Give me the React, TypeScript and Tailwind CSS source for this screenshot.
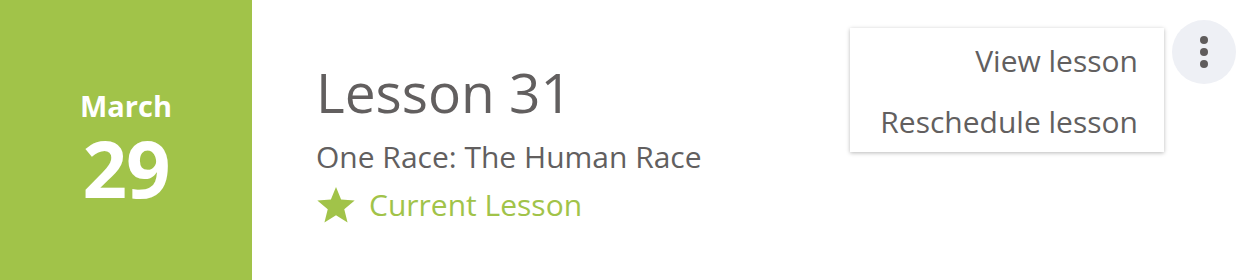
import { useState } from 'react'

// ------------------------------------------------------------
// Lesson card with open menu
// ------------------------------------------------------------

const MENU_ITEMS = ['View lesson', 'Reschedule lesson']

function StarIcon() {
  return (
    <svg width="40" height="38" viewBox="0 0 24 23" className="shrink-0">
      <path
        d="M12 0.6l3.1 7.6 8.2.6-6.3 5.3 2 8-7-4.4-7 4.4 2-8L.7 8.8l8.2-.6z"
        fill="#a1c349"
      />
    </svg>
  )
}

function KebabButton({ onClick }: { onClick: () => void }) {
  return (
    <button
      onClick={onClick}
      className="w-16 h-16 rounded-full bg-[#eef0f5] flex flex-col items-center justify-center gap-[4px]"
    >
      <span className="w-[8px] h-[8px] rounded-full bg-[#5f5c5c]" />
      <span className="w-[8px] h-[8px] rounded-full bg-[#5f5c5c]" />
      <span className="w-[8px] h-[8px] rounded-full bg-[#5f5c5c]" />
    </button>
  )
}

export default function App() {
  const [menuOpen, setMenuOpen] = useState(true)

  return (
    <div
      className="w-[1258px] h-[280px] flex bg-white"
      style={{ fontFamily: '"Open Sans", "Noto Sans", sans-serif' }}
    >
      {/* Date block */}
      <aside className="w-[252px] h-full bg-[#a1c349] flex flex-col items-center pt-[89px] text-white">
        <span className="text-[29px] leading-[34px] font-bold">March</span>
        <span className="text-[78px] leading-[82px] font-bold tracking-[-1px] mt-[4px]">29</span>
      </aside>

      {/* Lesson info */}
      <div className="flex-1 relative flex">
        <div className="flex flex-col pl-[64px] pt-[57px] text-[#625f5f]">
          <h1 className="text-[55px] leading-[70px] font-normal">Lesson 31</h1>
          <p className="text-[30px] leading-[40px] mt-[10px]">One Race: The Human Race</p>
          <div className="flex items-center gap-[13px] mt-[8px] text-[#a1c349]">
            <StarIcon />
            <span className="text-[30px] leading-[40px]">Current Lesson</span>
          </div>
        </div>

        <div className="ml-auto pt-[20px] pr-[22px]">
          <KebabButton onClick={() => setMenuOpen(!menuOpen)} />
        </div>

        {menuOpen && (
          <div className="absolute left-[598px] top-[28px] w-[314px] bg-white shadow-[0_1px_4px_rgba(0,0,0,0.28)] flex flex-col items-end pr-[26px] pt-[2px] text-[#625f5f]">
            {MENU_ITEMS.map((item) => (
              <button key={item} className="text-[30px] leading-[61px] h-[61px]">
                {item}
              </button>
            ))}
          </div>
        )}
      </div>
    </div>
  )
}
